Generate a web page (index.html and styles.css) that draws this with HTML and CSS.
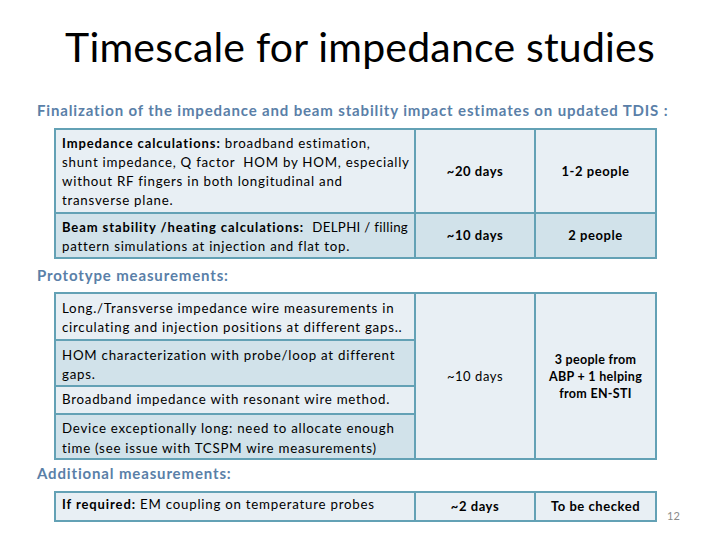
FILE: index.html
```html
<!DOCTYPE html>
<html>
<head>
<meta charset="utf-8">
<link rel="stylesheet" href="styles.css">
</head>
<body>
<div class="slide">
  <h1 class="title">Timescale for impedance studies</h1>

  <h2 class="section first">Finalization of the impedance and beam stability impact estimates on updated TDIS :</h2>
  <table class="grid t1">
    <colgroup><col class="c1"><col class="c2"><col class="c3"></colgroup>
    <tr class="light r1">
      <td class="desc"><b>Impedance calculations:</b> broadband estimation,<br>shunt impedance, Q factor&nbsp; HOM by HOM, especially<br>without RF fingers in both longitudinal and<br>transverse plane.</td>
      <td class="mid strong">~20 days</td>
      <td class="mid strong">1-2 people</td>
    </tr>
    <tr class="dark r2">
      <td class="desc"><b>Beam stability /heating calculations:</b>&nbsp; <span class="tight">DELPHI / filling</span><br>pattern simulations at injection and flat top.</td>
      <td class="mid strong">~10 days</td>
      <td class="mid strong">2 people</td>
    </tr>
  </table>

  <h2 class="section second">Prototype measurements:</h2>
  <table class="grid t2">
    <colgroup><col class="c1"><col class="c2"><col class="c3"></colgroup>
    <tr class="light p1">
      <td class="desc">Long./Transverse impedance wire measurements in<br>circulating and injection positions at different gaps..</td>
      <td class="mid plain" rowspan="4">~10 days</td>
      <td class="mid strong small" rowspan="4">3 people from<br>ABP + 1 helping<br>from EN-STI</td>
    </tr>
    <tr class="dark p2">
      <td class="desc">HOM characterization with probe/loop at different<br>gaps.</td>
    </tr>
    <tr class="light p3">
      <td class="desc">Broadband impedance with resonant wire method.</td>
    </tr>
    <tr class="dark p4">
      <td class="desc">Device exceptionally long: need to allocate enough<br>time (see issue with TCSPM wire measurements)</td>
    </tr>
  </table>

  <h2 class="section third">Additional measurements:</h2>
  <div class="last-row">
    <table class="grid t3">
      <colgroup><col class="c1"><col class="c2"><col class="c3"></colgroup>
      <tr class="light a1">
        <td class="desc"><b>If required:</b> EM coupling on temperature probes</td>
        <td class="mid strong">~2 days</td>
        <td class="mid strong">To be checked</td>
      </tr>
    </table>
    <span class="page-num">12</span>
  </div>
</div>
</body>
</html>
```

FILE: styles.css
```css
html, body {
  margin: 0;
  padding: 0;
  background: #ffffff;
}

.slide {
  width: 720px;
  height: 540px;
  font-family: Lato, "Open Sans", sans-serif;
  color: #000;
  overflow: hidden;
}

.title {
  margin: 0;
  padding-top: 22px;
  height: 50px;
  line-height: 50px;
  font-size: 41px;
  font-weight: 400;
  letter-spacing: 0.2px;
  text-align: center;
  color: #000;
}

.section {
  margin: 0;
  padding-left: 37px;
  height: 20px;
  line-height: 20px;
  font-size: 15px;
  font-weight: 700;
  letter-spacing: 0.85px;
  color: #5a7fa8;
}

.section.first {
  margin-top: 28px;
  margin-bottom: 8px;
}

.section.second {
  margin-top: 6px;
  margin-bottom: 7px;
}

.section.third {
  margin-top: 3px;
  margin-bottom: 8px;
}

.grid {
  margin-left: 54px;
  width: 601px;
  border-collapse: collapse;
  table-layout: fixed;
  border: 2px solid #63a1b5;
  font-size: 13px;
  line-height: 19px;
  letter-spacing: 0.55px;
}

.grid td {
  border: 2px solid #63a1b5;
  padding: 0 6px;
}

.c1 { width: 360px; }
.c2 { width: 120px; }
.c3 { width: 121px; }

.light td { background: #e8eff4; }
.dark td { background: #d1e2ea; }
.t2 td.mid { background: #e8eff4; }

.grid td.desc {
  vertical-align: top;
  padding-top: 4px;
  padding-bottom: 0;
  font-size: 13.3px;
  letter-spacing: 0.75px;
  white-space: nowrap;
  overflow: hidden;
}

.grid td.desc b {
  font-size: 13px;
  letter-spacing: 0.9px;
}

.grid td.desc .tight {
  letter-spacing: 0.3px;
}

.grid td.mid {
  text-align: center;
  vertical-align: middle;
}

.strong { font-weight: 700; }
.plain { font-weight: 400; }
.grid td.small { font-size: 12.5px; line-height: 17px; letter-spacing: 0.3px; }

.r1 { height: 84px; }
.r2 { height: 45px; }

.p1 { height: 47px; }
.p2 { height: 46px; }
.p3 { height: 28px; }
.p4 { height: 45px; }

.t2 .p1 td.desc { padding-top: 5px; }
.t2 .p2 td.desc { padding-top: 5px; }
.t2 .p3 td.desc { padding-top: 3px; }
.t2 .p4 td.desc { padding-top: 3px; line-height: 20px; }

.a1 { height: 29px; }
.t3 .a1 td.desc { padding-top: 2px; }

.last-row {
  display: flex;
  align-items: flex-end;
}

.last-row .grid {
  flex: none;
}

.page-num {
  margin-left: 10px;
  margin-bottom: -1px;
  font-size: 11px;
  line-height: 14px;
  color: #8b8b8b;
}
```
